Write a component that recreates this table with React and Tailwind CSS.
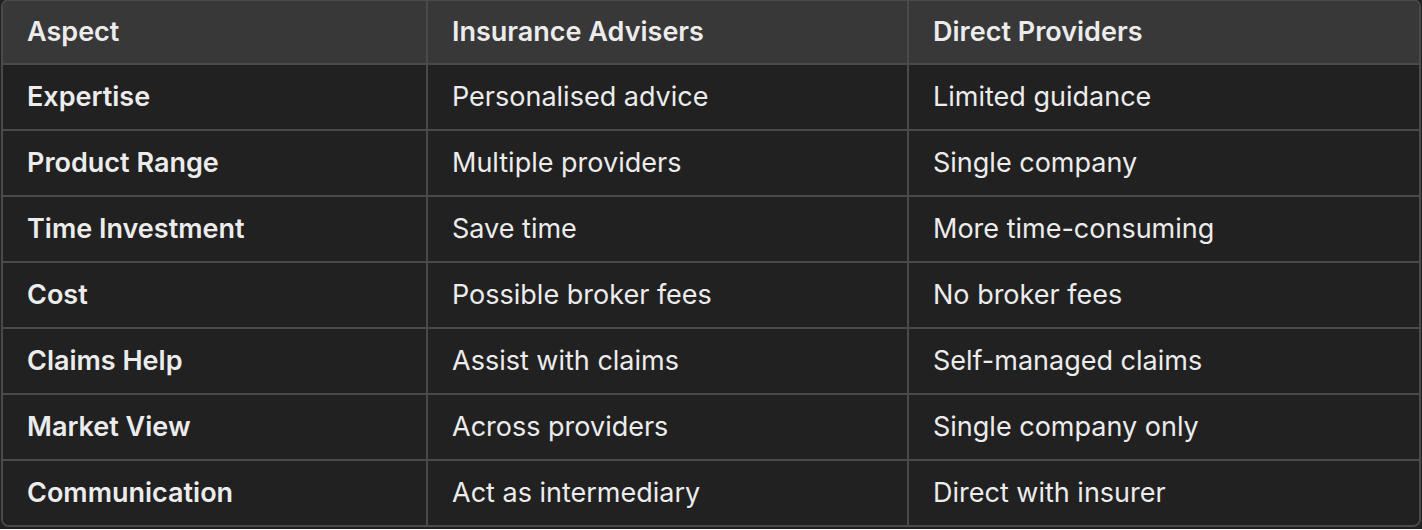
import React from 'react';

const ROWS = [
    ["Expertise", "Personalised advice", "Limited guidance"],
    ["Product Range", "Multiple providers", "Single company"],
    ["Time Investment", "Save time", "More time-consuming"],
    ["Cost", "Possible broker fees", "No broker fees"],
    ["Claims Help", "Assist with claims", "Self-managed claims"],
    ["Market View", "Across providers", "Single company only"],
    ["Communication", "Act as intermediary", "Direct with insurer"],
];

const COLS = "grid grid-cols-[423px_481px_1fr]";

export default function App() {
    return (
        <div className="w-[1422px] h-[530px] bg-[#212121] font-['Inter','Liberation_Sans',sans-serif] text-[#ececec]">
            <div className="ml-[1px] mr-[1px] mt-[-1px] border-2 border-[#4a4a4a] rounded-lg overflow-hidden">
                <div className={`${COLS} bg-[#383838] h-[62px] text-[27px] font-semibold`}>
                    <div className="flex items-center pl-[24px]">Aspect</div>
                    <div className="flex items-center pl-[24px] border-l-2 border-[#4a4a4a]">Insurance Advisers</div>
                    <div className="flex items-center pl-[24px] border-l-2 border-[#4a4a4a]">Direct Providers</div>
                </div>
                {ROWS.map(([a, b, c]) => (
                    <div key={a} className={`${COLS} h-[66px] border-t-2 border-[#4a4a4a] text-[27px] bg-[#212121]`}>
                        <div className="flex items-center pl-[24px] font-semibold">{a}</div>
                        <div className="flex items-center pl-[24px] border-l-2 border-[#4a4a4a]">{b}</div>
                        <div className="flex items-center pl-[24px] border-l-2 border-[#4a4a4a]">{c}</div>
                    </div>
                ))}
            </div>
        </div>
    );
}
